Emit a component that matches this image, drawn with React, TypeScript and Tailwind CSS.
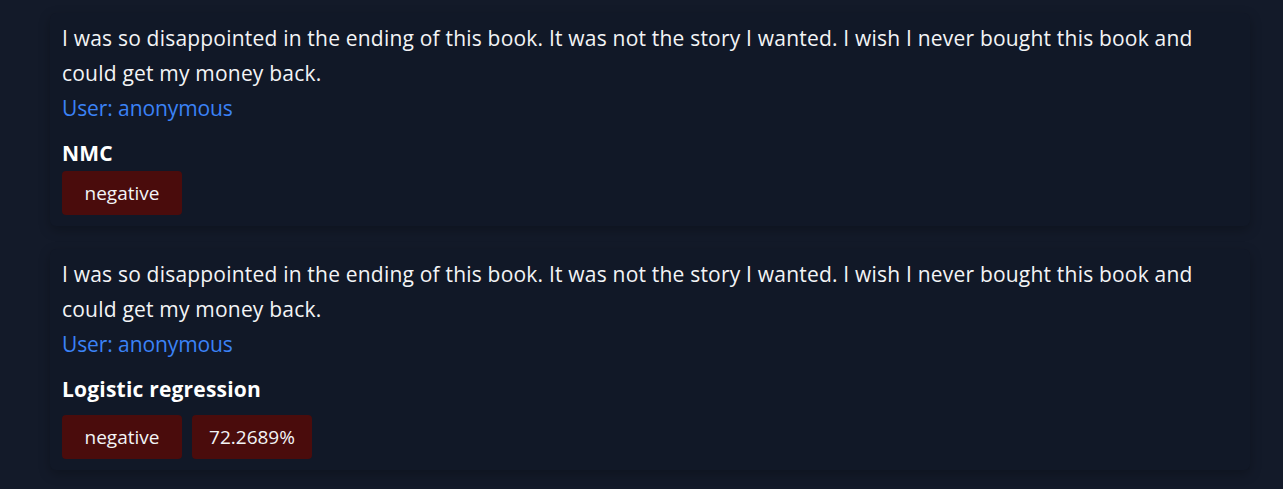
import React from "react";

const TEXT =
  "I was so disappointed in the ending of this book. It was not the story I wanted. I wish I never bought this book and could get my money back.";

function Tag({ children }: { children: React.ReactNode }) {
  return (
    <span className="flex h-[44px] w-[120px] items-center justify-center rounded-[4px] bg-[#4a0c0c] text-[19px] text-[#f3f4f6]">
      {children}
    </span>
  );
}

function Card({
  title,
  tags,
  wide,
}: {
  title: string;
  tags: string[];
  wide?: boolean;
}) {
  return (
    <div className="w-[1200px] rounded-[6px] bg-[#111827] px-3 pt-2 pb-[11px] shadow-[0_4px_12px_rgba(0,0,0,0.25)]">
      <p className="text-[21px] leading-[35px] text-[#f3f4f6] tracking-[0.2px]">{TEXT}</p>
      <p className="text-[21px] leading-[35px] text-[#3b82f6] tracking-[-0.1px]">User: anonymous</p>
      <h3 className="mt-[13px] text-[21px] leading-[28px] font-bold text-white tracking-[0.2px]">{title}</h3>
      <div className={wide ? "mt-[12px] flex gap-[10px]" : "mt-[4px] flex gap-[10px]"}>
        {tags.map((t) => (
          <Tag key={t}>{t}</Tag>
        ))}
      </div>
    </div>
  );
}

export default function App() {
  return (
    <div
      className="min-h-[489px] bg-[#131a29] pl-[50px] pt-[13px]"
      style={{ fontFamily: '"Open Sans", "Noto Sans", sans-serif' }}
    >
      <div className="flex flex-col gap-[23px]">
        <Card title="NMC" tags={["negative"]} />
        <Card title="Logistic regression" tags={["negative", "72.2689%"]} wide />
      </div>
    </div>
  );
}
